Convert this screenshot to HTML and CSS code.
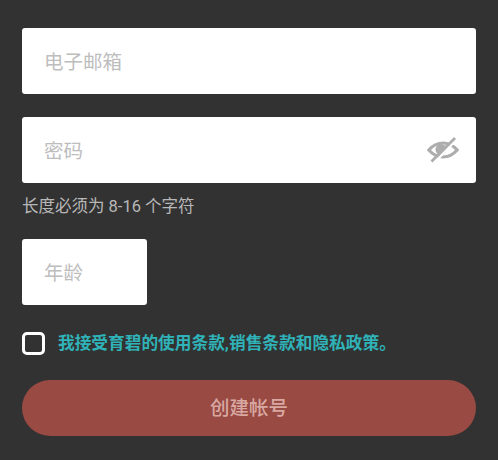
FILE: index.html
```html
<!DOCTYPE html>
<html lang="zh-CN">
<head>
<meta charset="utf-8">
<title>创建帐号</title>
<link rel="stylesheet" href="styles.css">
</head>
<body>
<form class="form">
  <div class="field field-email"><span class="placeholder">电子邮箱</span></div>
  <div class="field field-password">
    <span class="placeholder">密码</span>
    <svg class="eye" viewBox="0 0 32 26" width="32" height="26" aria-hidden="true">
      <path d="M1.800 13C6 8.200 10.500 6 16 6S26 8.200 30.200 13C26 17.800 21.500 20 16 20S6 17.800 1.800 13Z" fill="none" stroke="#adadad" stroke-width="3.200"/>
      <circle cx="14" cy="12.500" r="5.500" fill="#adadad"/>
      <path d="M29.500 2.500 8 25" stroke="#fff" stroke-width="2.500"/>
      <path d="M28 1 4.500 24.500" stroke="#adadad" stroke-width="2.800"/>
    </svg>
  </div>
  <p class="hint">长度必须为 8-16 个字符</p>
  <div class="field field-age"><span class="placeholder">年龄</span></div>
  <div class="terms">
    <span class="checkbox"></span>
    <span class="terms-text">我接受育碧的使用条款,销售条款和隐私政策。</span>
  </div>
  <div class="submit">创建帐号</div>
</form>
</body>
</html>
```
FILE: styles.css
```css
html, body {
  margin: 0;
  padding: 0;
  height: 100%;
  overflow: hidden;
  background: #323232;
  font-family: Roboto, "Noto Sans CJK SC", sans-serif;
}
.form {
  display: flex;
  flex-direction: column;
  align-items: stretch;
  padding: 28px 22px 0;
}
.field {
  display: flex;
  align-items: center;
  justify-content: space-between;
  box-sizing: border-box;
  height: 66px;
  padding: 0 17px 0 22px;
  background: #fff;
  border-radius: 3px;
}
.field-password {
  margin-top: 23px;
}
.placeholder {
  padding-top: 4px;
  font-size: 19.500px;
  line-height: 24px;
  color: #bdbdbd;
}
.eye {
  display: block;
}
.hint {
  margin: 14px 0 0;
  height: 20px;
  line-height: 20px;
  font-size: 16.500px;
  color: #b8b8b8;
}
.field-age {
  width: 124.500px;
  margin-top: 22px;
}
.terms {
  display: flex;
  align-items: center;
  gap: 13px;
  margin-top: 27px;
  height: 23px;
}
.checkbox {
  box-sizing: border-box;
  width: 23px;
  height: 23px;
  border: 3px solid #fff;
  border-radius: 5px;
}
.terms-text {
  font-size: 16.700px;
  line-height: 23px;
  font-weight: 700;
  color: #2fb3b8;
}
.submit {
  box-sizing: border-box;
  margin-top: 25px;
  height: 56px;
  padding-top: 2px;
  line-height: 54px;
  border-radius: 28px;
  background: #984a43;
  color: #d8a8a2;
  font-size: 19.500px;
  font-weight: 500;
  text-align: center;
}
```
